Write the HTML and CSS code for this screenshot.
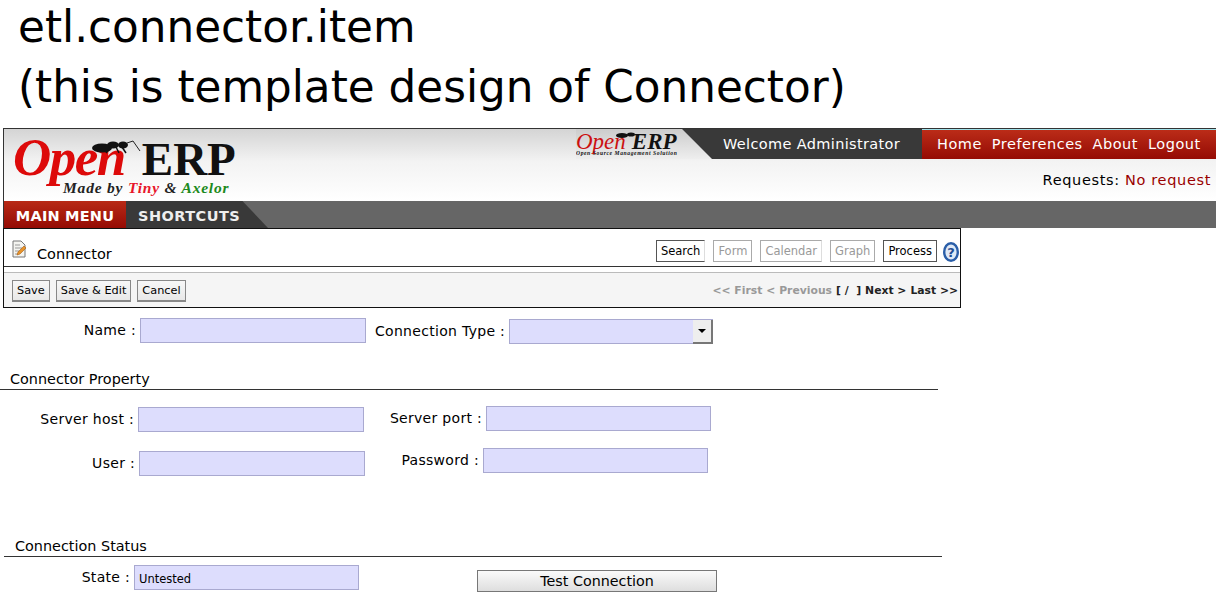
FILE: index.html
```html
<!DOCTYPE html>
<html lang="en">
<head>
  <meta charset="UTF-8">
  <meta name="viewport" content="width=device-width, initial-scale=1.0">
  <title>etl.connector.item</title>
  <link rel="stylesheet" href="styles.css">
</head>
<body>
  <h1 class="slide-title">etl.connector.item<br>(this is template design of Connector)</h1>

  <div class="app">
    <header class="top">
      <div class="logo">
        <div class="logo-name"><span class="logo-open">Open</span><span class="logo-erp">ERP</span></div>
        <svg class="ant" viewBox="0 0 50 14" aria-hidden="true">
          <ellipse cx="10" cy="8" rx="10" ry="4.5" fill="#111"/>
          <ellipse cx="21" cy="5" rx="6" ry="3.5" fill="#111"/>
          <ellipse cx="31" cy="5" rx="5" ry="3.5" fill="#111"/>
          <path d="M19 7 L14 13 M24 7 L27 13 M30 7 L34 13" stroke="#111" stroke-width="1.5" fill="none"/>
          <path d="M35 3 L41 1 L48 11" fill="none" stroke="#222"/>
        </svg>
        <div class="logo-sub">Made by <span class="tiny">Tiny</span> &amp; <span class="axelor">Axelor</span></div>
      </div>
      <div class="top-right">
        <div class="top-bar">
          <div class="mini-logo">
            <div class="mini-name"><span class="mini-open">Open</span><span class="mini-erp">ERP</span></div>
            <svg class="mini-ant" viewBox="0 0 24 6" aria-hidden="true">
              <ellipse cx="6" cy="3.5" rx="6" ry="2.5" fill="#111"/>
              <ellipse cx="15" cy="2.5" rx="4" ry="2" fill="#111"/>
              <path d="M18 2 L23 5" stroke="#222" stroke-width=".7"/>
            </svg>
            <div class="mini-sub">Open Source Management Solution</div>
          </div>
          <div class="welcome">Welcome Administrator</div>
          <nav class="top-nav">
            <a>Home</a><a>Preferences</a><a>About</a><a>Logout</a>
          </nav>
        </div>
        <div class="requests">Requests: <span>No request</span></div>
      </div>
    </header>

    <div class="menu-bar">
      <div class="tab-main">MAIN MENU</div>
      <div class="tab-short">SHORTCUTS</div>
    </div>

    <section class="panel">
      <div class="panel-head">
        <svg class="note-icon" viewBox="0 0 14 18" aria-hidden="true">
          <path d="M1 1 H9 L13 5 V17 H1 Z" fill="#f4f4f0" stroke="#777"/>
          <path d="M3 5 H8 M3 8 H10 M3 11 H7 M3 14 H6" stroke="#999"/>
          <path d="M12 6 L14 8 L8 14 L5 15 L6 12 Z" fill="#e8942a" stroke="#a85c10" stroke-width=".6"/>
        </svg>
        <span class="panel-title">Connector</span>
        <div class="views">
          <button class="view clip">Search</button>
          <button class="view off">Form</button>
          <button class="view off clip">Calendar</button>
          <button class="view off">Graph</button>
          <button class="view">Process</button>
          <svg class="help" viewBox="0 0 16 20" aria-label="Help">
            <ellipse cx="8" cy="10" rx="6.8" ry="8.8" fill="#dfe9f6" stroke="#2a5ea8" stroke-width="2.4"/>
            <text x="8" y="15" text-anchor="middle" class="help-mark">?</text>
          </svg>
        </div>
      </div>
      <div class="panel-tools">
        <button class="act">Save</button>
        <button class="act">Save &amp; Edit</button>
        <button class="act">Cancel</button>
        <div class="pager">
          <span class="dim">&lt;&lt; First</span>
          <span class="dim">&lt; Previous</span>
          <span class="pos">[ / &nbsp;]</span>
          <span>Next &gt;</span>
          <span>Last &gt;&gt;</span>
        </div>
      </div>
    </section>
  </div>

  <form class="sheet">
    <div class="row row-name">
      <label class="lbl lbl-name">Name :</label>
      <input class="field">
      <label class="lbl lbl-type">Connection Type :</label>
      <div class="combo"><span class="combo-btn"></span></div>
    </div>

    <h2 class="sep sep-prop">Connector Property</h2>

    <div class="row row-host">
      <label class="lbl lbl-host">Server host :</label>
      <input class="field">
      <label class="lbl lbl-port">Server port :</label>
      <input class="field field-port">
    </div>

    <div class="row row-user">
      <label class="lbl lbl-user">User :</label>
      <input class="field">
      <label class="lbl lbl-pass">Password :</label>
      <input class="field field-pass">
    </div>

    <h2 class="sep sep-status">Connection Status</h2>

    <div class="row row-state">
      <label class="lbl lbl-state">State :</label>
      <input class="field field-state" value="Untested">
      <button type="button" class="test-btn">Test Connection</button>
    </div>
  </form>
</body>
</html>
```

FILE: styles.css
```css
/* General */
body {
  margin: 0;
  background: #fff;
  color: #000;
  font-family: "DejaVu Sans", sans-serif;
  overflow: hidden;
}

.slide-title {
  height: 128px;
  margin: -3px 0 3px;
  padding-left: 18px;
  box-sizing: border-box;
  font-size: 43.7px;
  font-weight: normal;
  line-height: 60px;
}

/* Application header */
.app {
  margin-left: 3px;
}

.top {
  display: flex;
  justify-content: space-between;
  height: 73px;
  box-sizing: border-box;
  border-top: 1px solid #333;
  border-left: 1px solid #333;
  background: linear-gradient(#d4d4d4, #f3f3f3 45%, #fff);
}

.logo {
  position: relative;
  width: 250px;
  padding: 2px 0 0 9px;
  font-family: "Liberation Serif", serif;
}

.logo-name {
  height: 46px;
  line-height: 52px;
  white-space: nowrap;
}

.logo-open {
  color: #dd0a0a;
  font-size: 53px;
  font-style: italic;
  font-weight: bold;
  letter-spacing: -1.5px;
}

.logo-erp {
  margin-left: 17px;
  color: #111;
  font-size: 47px;
  font-weight: bold;
}

.ant {
  position: absolute;
  left: 88px;
  top: 11px;
  width: 50px;
  height: 14px;
}

.logo-sub {
  margin: 3px 0 0 50px;
  font-size: 15.5px;
  font-style: italic;
  font-weight: bold;
  line-height: 16px;
  letter-spacing: .8px;
  color: #222;
  white-space: nowrap;
}

.tiny { color: #e8162a; }
.axelor { color: #1c8a1c; }

.top-right {
  display: flex;
  flex-direction: column;
  width: 640px;
}

.top-bar {
  display: flex;
  height: 30px;
  background: #393939;
  color: #fff;
  font-size: 14.5px;
}

.mini-logo {
  position: relative;
  flex: none;
  width: 136px;
  background: linear-gradient(#ccc, #eee);
  clip-path: polygon(0 0, 78% 0, 100% 100%, 0 100%);
  color: #111;
  font-family: "Liberation Serif", serif;
  font-style: italic;
}

.mini-name {
  height: 21px;
  font-size: 23px;
  line-height: 26px;
}

.mini-open { color: #cc1010; }
.mini-erp { margin-left: 6px; font-weight: bold; }

.mini-ant {
  position: absolute;
  left: 40px;
  top: 3px;
  width: 24px;
  height: 6px;
}

.mini-sub {
  font-size: 5.6px;
  font-weight: bold;
  line-height: 6px;
  letter-spacing: .6px;
  white-space: nowrap;
}

.welcome {
  flex: none;
  width: 210px;
  padding-left: 11px;
  box-sizing: border-box;
  line-height: 30px;
  letter-spacing: .35px;
}

.top-nav {
  display: flex;
  flex: 1;
  gap: 10px;
  padding-left: 15px;
  border-top: 1px solid #9fe0e8;
  background: linear-gradient(#bb2c18, #950b04);
  line-height: 29px;
  letter-spacing: .5px;
}

.requests {
  margin: 13px 5px 0 0;
  text-align: right;
  font-size: 14.5px;
  letter-spacing: .65px;
}

.requests span { color: #990000; }

/* Menu bar */
.menu-bar {
  display: flex;
  height: 27px;
  border-left: 1px solid #333;
  background: #666;
  font-size: 14.5px;
  font-weight: bold;
  line-height: 31px;
  color: #fff;
  letter-spacing: .2px;
}

.tab-main {
  width: 122px;
  text-align: center;
  background: linear-gradient(#b82a16, #950b04);
}

.tab-short {
  width: 142px;
  padding-left: 12px;
  box-sizing: border-box;
  background: #393939;
  color: #eee;
  letter-spacing: .45px;
  clip-path: polygon(0 0, 82% 0, 100% 100%, 0 100%);
}

/* Panel */
.panel {
  width: 958px;
  height: 80px;
  box-sizing: border-box;
  border: 1px solid #111;
}

.panel-head {
  display: flex;
  align-items: flex-end;
  height: 38px;
  box-sizing: border-box;
  padding: 0 1px 4px 8px;
  border-bottom: 1px solid #333;
}

.note-icon {
  width: 14px;
  height: 18px;
  margin-bottom: 4px;
}

.panel-title {
  margin: 0 0 -1px 11px;
  font-size: 14.5px;
  line-height: 18px;
}

.views {
  display: flex;
  align-items: flex-end;
  gap: 8px;
  margin-left: auto;
}

.view {
  height: 22px;
  padding: 0 4px;
  border: 1px solid #555;
  background: #fff;
  font: 11.5px "DejaVu Sans", sans-serif;
  color: #000;
}

.view.off {
  border-color: #aaa;
  color: #999;
}

.view.clip { border-right-color: #ddd; }

.help {
  width: 16px;
  height: 20px;
  margin-left: -2px;
}

.help-mark {
  font: bold 13px "DejaVu Sans", sans-serif;
  fill: #1f4d94;
}

.panel-tools {
  display: flex;
  align-items: center;
  height: 35px;
  margin-top: 5px;
  box-sizing: border-box;
  padding: 1px 2px 0 8px;
  gap: 6px;
  border-top: 1px solid #bbb;
  background: #f5f5f5;
}

.act {
  height: 22px;
  padding: 0 4px;
  border: 1px solid #888;
  border-bottom: 2px solid #888;
  background: linear-gradient(#f7f7f7, #e8e8e8);
  font: 11.3px "DejaVu Sans", sans-serif;
  color: #000;
}

.pager {
  display: flex;
  gap: 4px;
  margin-left: auto;
  font-size: 10.8px;
  font-weight: bold;
  color: #222;
}

.pager .dim { color: #999; }

/* Form */
.row {
  display: flex;
  align-items: flex-start;
  font-size: 14px;
  letter-spacing: .3px;
}

.lbl {
  flex: none;
  text-align: right;
  white-space: nowrap;
}

.field {
  flex: none;
  width: 226px;
  height: 25px;
  box-sizing: border-box;
  padding: 0 4px;
  border: 1px solid #a9a9d0;
  border-radius: 0;
  background: #ddddfd;
  font: 11.5px "DejaVu Sans", sans-serif;
}

.row-name { margin-top: 10px; }
.lbl-name { width: 136px; margin: 4px 4px 0 0; }
.lbl-type { margin: 5px 4px 0 9px; }

.combo {
  display: flex;
  justify-content: flex-end;
  width: 204px;
  height: 25px;
  margin-top: 1px;
  box-sizing: border-box;
  border: 1px solid #a9a9d0;
  border-right: none;
  background: #ddddfd;
}

.combo-btn {
  position: relative;
  width: 20px;
  box-sizing: border-box;
  margin-bottom: -1px;
  border-right: 2px solid #777;
  border-bottom: 2px solid #777;
  background: #eee;
}

.combo-btn::after {
  content: "";
  position: absolute;
  left: 5px;
  top: 9px;
  border: 4px solid transparent;
  border-top: 4px solid #000;
  border-bottom: none;
}

.sep {
  margin: 0;
  font-size: 14.4px;
  font-weight: normal;
  line-height: 18px;
  border-bottom: 1px solid #333;
}

.sep-prop {
  width: 928px;
  margin-top: 26px;
  padding: 0 0 1px 10px;
}

.row-host { margin-top: 17px; }
.lbl-host { width: 134px; margin: 4px 4px 0 0; }
.lbl-port { width: 118px; margin: 3px 4px 0 0; }
.field-port { width: 225px; margin-top: -1px; }

.row-user { margin-top: 19px; }
.lbl-user { width: 135px; margin: 4px 4px 0 0; }
.lbl-pass { width: 114px; margin: 1px 4px 0 0; }
.field-pass { width: 225px; margin-top: -3px; }

.sep-status {
  width: 938px;
  margin: 61px 0 0 4px;
  padding: 0 0 1px 11px;
  box-sizing: border-box;
}

.row-state { margin-top: 8px; }
.lbl-state { width: 130px; margin: 4px 4px 0 0; }
.field-state { width: 225px; padding-top: 2px; }

.test-btn {
  width: 240px;
  height: 22px;
  margin: 5px 0 0 118px;
  padding: 0;
  border: 1px solid #777;
  background: linear-gradient(#fafafa, #dedede);
  font: 14.3px "DejaVu Sans", sans-serif;
  color: #000;
}
```
